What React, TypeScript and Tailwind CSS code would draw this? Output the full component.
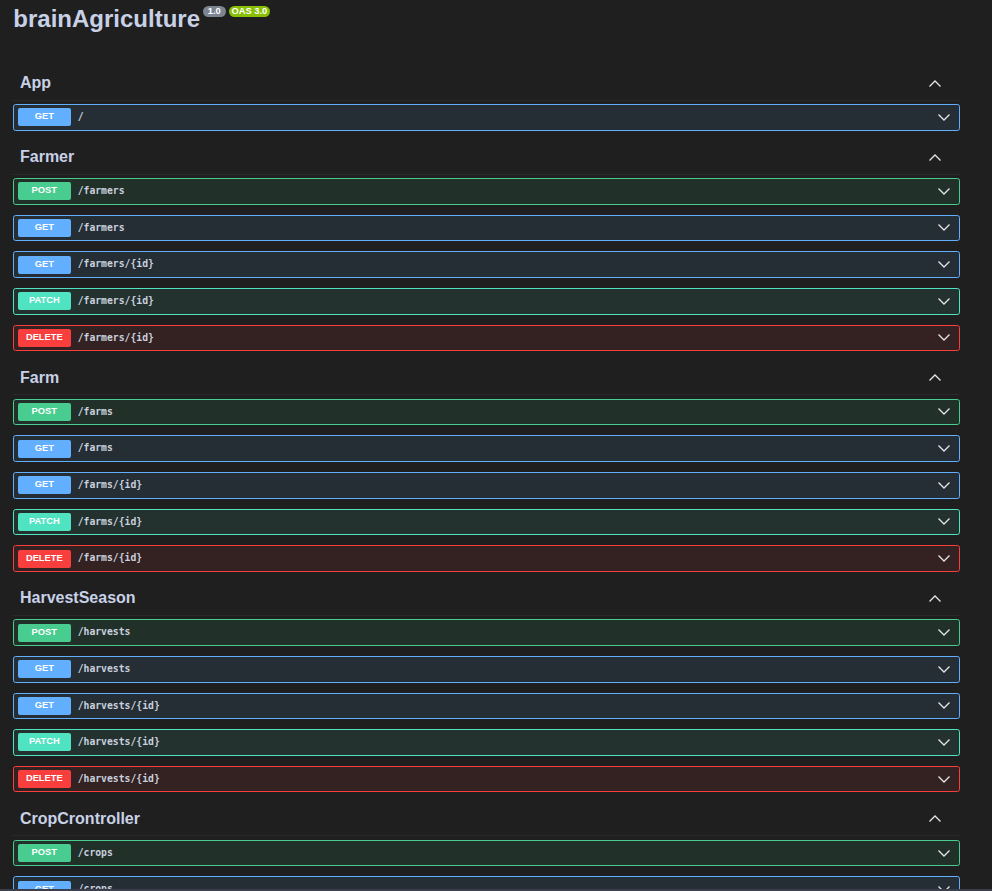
import React from "react";

type Method = "GET" | "POST" | "PATCH" | "DELETE";

interface Section {
  name: string;
  ops: [Method, string][];
}

const sections: Section[] = [
  { name: "App", ops: [["GET", "/"]] },
  {
    name: "Farmer",
    ops: [
      ["POST", "/farmers"],
      ["GET", "/farmers"],
      ["GET", "/farmers/{id}"],
      ["PATCH", "/farmers/{id}"],
      ["DELETE", "/farmers/{id}"],
    ],
  },
  {
    name: "Farm",
    ops: [
      ["POST", "/farms"],
      ["GET", "/farms"],
      ["GET", "/farms/{id}"],
      ["PATCH", "/farms/{id}"],
      ["DELETE", "/farms/{id}"],
    ],
  },
  {
    name: "HarvestSeason",
    ops: [
      ["POST", "/harvests"],
      ["GET", "/harvests"],
      ["GET", "/harvests/{id}"],
      ["PATCH", "/harvests/{id}"],
      ["DELETE", "/harvests/{id}"],
    ],
  },
  {
    name: "CropCrontroller",
    ops: [
      ["POST", "/crops"],
      ["GET", "/crops"],
      ["GET", "/crops/{id}"],
      ["PATCH", "/crops/{id}"],
      ["DELETE", "/crops/{id}"],
    ],
  },
];

const methodStyles: Record<Method, { row: string; badge: string }> = {
  GET: { row: "border-[#61affe] bg-[#61affe]/10", badge: "bg-[#61affe]" },
  POST: { row: "border-[#49cc90] bg-[#49cc90]/10", badge: "bg-[#49cc90]" },
  PATCH: { row: "border-[#50e3c2] bg-[#50e3c2]/10", badge: "bg-[#50e3c2]" },
  DELETE: { row: "border-[#f93e3e] bg-[#f93e3e]/10", badge: "bg-[#f93e3e]" },
};

function Chevron({ up = false }: { up?: boolean }) {
  return (
    <svg width="12" height="7" viewBox="0 0 12 7" className="shrink-0">
      <polyline
        points={up ? "0.5,6.5 6,1 11.5,6.5" : "0.5,0.5 6,6 11.5,0.5"}
        fill="none"
        stroke="#e6e6e6"
        strokeWidth="1.3"
      />
    </svg>
  );
}

function OpRow({ method, path }: { method: Method; path: string }) {
  const s = methodStyles[method];
  return (
    <div
      className={`flex items-center h-[26.67px] mb-[10px] px-[3.33px] border rounded-[2.67px] ${s.row}`}
    >
      <div
        className={`w-[53.33px] h-[18px] rounded-[2px] flex items-center justify-center text-white text-[9.33px] font-bold font-['Liberation_Sans',sans-serif] ${s.badge}`}
      >
        {method}
      </div>
      <span className="ml-[6.67px] text-[9.75px] font-bold text-[#c9d0de] font-['DejaVu_Sans_Mono',monospace]">
        {path}
      </span>
      <div className="ml-auto mr-[6px]">
        <Chevron />
      </div>
    </div>
  );
}

export default function App() {
  return (
    <div className="h-[891px] flex flex-col bg-[#1f1f1f] overflow-hidden font-['Liberation_Sans',sans-serif]">
      <div className="flex-1 overflow-hidden">
        <div className="w-[946.67px] ml-[13.33px]">
          <div className="h-[66.67px] flex items-start">
            <h1 className="mt-[7px] text-[24px] leading-[24px] font-bold text-[#c8d1e6]">
              brainAgriculture
            </h1>
            <span className="mt-[6px] ml-[2.7px] h-[11px] px-[5px] rounded-full bg-[#7d8492] text-white text-[9.33px] leading-[11px] font-bold">
              1.0
            </span>
            <span className="mt-[6px] ml-[3.3px] h-[11px] px-[2.5px] rounded-full bg-[#89bf04] text-white text-[9.33px] leading-[11px] font-bold">
              OAS 3.0
            </span>
          </div>

          {sections.map((sec) => (
            <div key={sec.name}>
              <div className="h-[34px] mb-[3.33px] flex items-center pl-[6.67px] pr-[18.5px] border-b border-white/5">
                <h3 className="text-[16px] leading-[20px] font-bold text-[#c8d1e6]">
                  {sec.name}
                </h3>
                <div className="ml-auto">
                  <Chevron up />
                </div>
              </div>
              {sec.ops.map(([m, p], i) => (
                <OpRow key={i} method={m} path={p} />
              ))}
            </div>
          ))}
        </div>
      </div>
      <div className="h-[2px] bg-[#3a3f4b]" />
    </div>
  );
}
